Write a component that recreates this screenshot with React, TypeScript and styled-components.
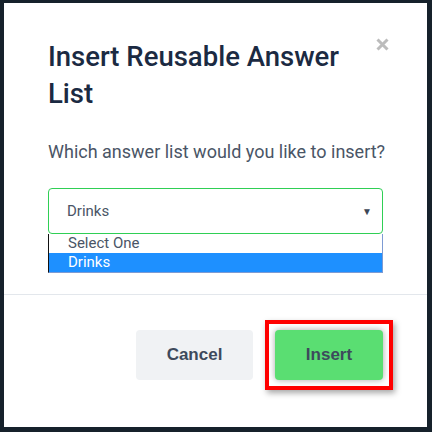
import React from 'react';
import styled, { createGlobalStyle } from 'styled-components';

const GlobalStyle = createGlobalStyle`
    html, body {
        margin: 0;
        padding: 0;
        background: #16212b;
    }
    * {
        box-sizing: border-box;
    }
`;

const App = () => {
    return (
        <>
            <GlobalStyle />
            <Modal>
                <Header>
                    <Title>Insert Reusable Answer List</Title>
                    <CloseButton aria-label="Close">
                        <svg width="13" height="13" viewBox="0 0 13 13">
                            <path d="M1.5 1.5 L11.5 11.5 M11.5 1.5 L1.5 11.5" stroke="#bcbcbc" strokeWidth="3" />
                        </svg>
                    </CloseButton>
                </Header>

                <Body>
                    <Question>Which answer list would you like to insert?</Question>

                    <SelectBox>
                        <SelectValue>Drinks</SelectValue>
                        <Caret>▼</Caret>
                    </SelectBox>
                    <OptionList>
                        <Option>Select One</Option>
                        <Option selected>Drinks</Option>
                    </OptionList>
                </Body>

                <Footer>
                    <CancelButton>Cancel</CancelButton>
                    <Highlight>
                        <InsertButton>Insert</InsertButton>
                    </Highlight>
                </Footer>
            </Modal>
        </>
    )
}


const Modal = styled.div`
    margin: 3px 5px 0 4px;
    width: 423px;
    height: 424px;
    background: #ffffff;
    display: flex;
    flex-direction: column;
    font-family: Roboto, "Liberation Sans", sans-serif;
`;

const Header = styled.div`
    display: flex;
    justify-content: space-between;
    align-items: flex-start;
    padding: 35px 38px 0 44px;
`;

const Title = styled.h2`
    margin: 0;
    width: 300px;
    font-size: 27.5px;
    line-height: 37px;
    font-weight: 500;
    color: #1b2a42;
`;

const CloseButton = styled.div`
    display: flex;
    margin-top: 0;
    cursor: pointer;
`;

const Body = styled.div`
    padding: 28px 44px 21px 44px;
    border-bottom: 1px solid #e3e7ec;
`;

const Question = styled.p`
    margin: 0 0 24px 0;
    white-space: nowrap;
    font-size: 18px;
    line-height: 24px;
    color: #4a5566;
`;

const SelectBox = styled.div`
    display: flex;
    align-items: center;
    justify-content: space-between;
    width: 335px;
    height: 46px;
    padding: 0 10px 0 18px;
    border: 1px solid #2fcf55;
    border-radius: 4px;
    font-size: 15px;
    color: #4a5566;
`;

const SelectValue = styled.span``;

const Caret = styled.span`
    font-size: 10px;
    color: #3d4756;
`;

const OptionList = styled.div`
    width: 335px;
    border: 1px solid #7d9bd3;
    border-left-color: #111;
    border-top: none;
`;

const Option = styled.div<{ selected?: boolean }>`
    height: 19px;
    line-height: 19px;
    padding-left: 19px;
    font-size: 15px;
    color: ${p => p.selected ? '#ffffff' : '#4a5566'};
    background: ${p => p.selected ? '#1e90ff' : '#ffffff'};
`;

const Footer = styled.div`
    display: flex;
    justify-content: flex-end;
    align-items: center;
    gap: 12px;
    padding: 25px 34px 0 0;
`;

const CancelButton = styled.button`
    width: 117px;
    height: 50px;
    border: none;
    border-radius: 4px;
    background: #f0f2f4;
    font-family: "Liberation Sans", Arial, sans-serif;
    font-weight: 700;
    font-size: 17px;
    color: #3d4a5c;
    cursor: pointer;
`;

const Highlight = styled.div`
    padding: 6px;
    border: 4px solid #ff0000;
    box-shadow: 2px 3px 6px rgba(0, 0, 0, 0.35);
    background: #fff;
`;

const InsertButton = styled.button`
    display: block;
    width: 108px;
    height: 50px;
    border: none;
    border-radius: 4px;
    background: #5ade72;
    box-shadow: 0 0 6px rgba(0, 0, 0, 0.35);
    font-family: "Liberation Sans", Arial, sans-serif;
    font-weight: 700;
    font-size: 17px;
    color: #3d4a5c;
    cursor: pointer;
`;


export default App
